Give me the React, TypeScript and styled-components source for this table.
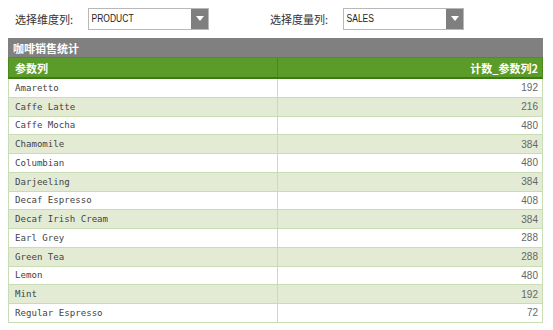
import React from 'react';
import styled, { createGlobalStyle } from 'styled-components';

const GlobalStyle = createGlobalStyle`
  body {
    margin: 0;
    background: #fff;
    font-family: "Liberation Sans", "Noto Sans CJK SC", sans-serif;
  }
`;

const Page = styled.div`
  width: 553px;
  padding: 7px 10px 0 8px;
  box-sizing: border-box;
`;

const Toolbar = styled.div`
  display: flex;
  align-items: center;
  height: 23px;
  padding-left: 7px;
`;

const Field = styled.div<{ $width: number }>`
  display: flex;
  align-items: center;
  width: ${(p) => p.$width}px;
`;

const Label = styled.span`
  font-size: 11px;
  color: #333;
  width: 73px;
  font-family: "Noto Sans CJK SC", sans-serif;
`;

const Select = styled.div`
  display: flex;
  width: 121px;
  height: 22px;
  border: 1px solid #b8b8b8;
  box-sizing: border-box;
`;

const SelectValue = styled.div`
  flex: 1;
  display: flex;
  align-items: center;
  padding-left: 3px;
  font-size: 10px;
  color: #222;
  transform: scaleX(0.85);
  transform-origin: left center;
`;

const SelectArrow = styled.div`
  width: 17px;
  background: #7f7f7f;
  display: flex;
  align-items: center;
  justify-content: center;
`;

const Table = styled.div`
  margin-top: 8px;
  width: 535px;
`;

const Title = styled.div`
  height: 20px;
  background: #808080;
  color: #fff;
  font-weight: bold;
  font-size: 11px;
  display: flex;
  align-items: center;
  padding-left: 5px;
  font-family: "Noto Sans CJK SC", sans-serif;
  box-sizing: border-box;
  border-bottom: 1px solid #6f6f6f;
`;

const Row = styled.div<{ $alt?: boolean }>`
  display: grid;
  grid-template-columns: 268px 1fr;
  height: 18.75px;
  box-sizing: border-box;
  background: ${(p) => (p.$alt ? '#e3ebd5' : '#fff')};
  border-left: 1px solid #c9ddb5;
  border-right: 1px solid #c9ddb5;
  border-bottom: 1px solid #c9ddb5;
`;

const HeadRow = styled(Row)`
  height: 21px;
  background: #5b9b29;
  border-color: #4a8a1c;
  border-bottom: 2px solid #3d7a12;
`;

const Cell = styled.div<{ $right?: boolean; $head?: boolean }>`
  display: flex;
  align-items: center;
  justify-content: ${(p) => (p.$right ? 'flex-end' : 'flex-start')};
  padding: 0 ${(p) => (p.$right ? '4px' : '6px')};
  border-left: ${(p) => (p.$right ? `1px solid ${p.$head ? '#4a8a1c' : '#c9ddb5'}` : 'none')};
  overflow: hidden;
  white-space: nowrap;
`;

const HeadText = styled.span`
  color: #fff;
  font-weight: bold;
  font-size: 11px;
  font-family: "Noto Sans CJK SC", sans-serif;
`;

const NameText = styled.span`
  font-family: "DejaVu Sans Mono", monospace;
  font-size: 9.1px;
  color: #444;
`;

const NumText = styled.span`
  font-family: "Liberation Sans", sans-serif;
  font-size: 10px;
  color: #666;
`;

const data: [string, number][] = [
  ['Amaretto', 192],
  ['Caffe Latte', 216],
  ['Caffe Mocha', 480],
  ['Chamomile', 384],
  ['Columbian', 480],
  ['Darjeeling', 384],
  ['Decaf Espresso', 408],
  ['Decaf Irish Cream', 384],
  ['Earl Grey', 288],
  ['Green Tea', 288],
  ['Lemon', 480],
  ['Mint', 192],
  ['Regular Espresso', 72],
];

function Dropdown({ value }: { value: string }) {
  return (
    <Select>
      <SelectValue>{value}</SelectValue>
      <SelectArrow>
        <svg width="8" height="5" viewBox="0 0 8 5">
          <path d="M0 0 L8 0 L4 5 Z" fill="#fff" />
        </svg>
      </SelectArrow>
    </Select>
  );
}

export default function App() {
  return (
    <Page>
      <GlobalStyle />
      <Toolbar>
        <Field $width={255}>
          <Label>选择维度列:</Label>
          <Dropdown value="PRODUCT" />
        </Field>
        <Field $width={200}>
          <Label>选择度量列:</Label>
          <Dropdown value="SALES" />
        </Field>
      </Toolbar>
      <Table>
        <Title>咖啡销售统计</Title>
        <HeadRow>
          <Cell $head>
            <HeadText>参数列</HeadText>
          </Cell>
          <Cell $right $head>
            <HeadText>计数_参数列2</HeadText>
          </Cell>
        </HeadRow>
        {data.map(([name, value], i) => (
          <Row key={name} $alt={i % 2 === 1}>
            <Cell>
              <NameText>{name}</NameText>
            </Cell>
            <Cell $right>
              <NumText>{value}</NumText>
            </Cell>
          </Row>
        ))}
      </Table>
    </Page>
  );
}
